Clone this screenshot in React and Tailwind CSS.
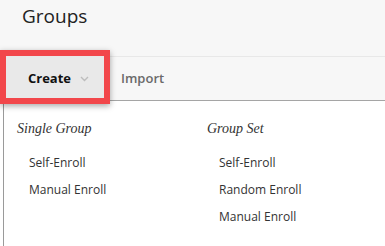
import React from 'react';

const Column = ({ title, items, className = '' }) => (
  <div className={`flex flex-col ${className}`}>
    <h3 className="text-[14px] italic text-[#333] leading-[18px] font-['Liberation_Serif',Georgia,serif]">{title}</h3>
    <ul className="mt-[16px] pl-[12px] flex flex-col gap-[9px]">
      {items.map((item) => (
        <li key={item} className="text-[12px] leading-[18px] text-[#333]">{item}</li>
      ))}
    </ul>
  </div>
);

const App = () => {
  return (
    <div className="w-[385px] h-[246px] overflow-hidden bg-white font-['Open_Sans',sans-serif]">
      <div className="h-[56px] bg-[#f7f7f7] pl-[22px] pt-[2px]">
        <h1 className="text-[19px] leading-[28px] text-[#222]">Groups</h1>
      </div>

      <div className="relative h-[45px] bg-[#f7f7f7] border-t border-[#e8e8e8] border-b border-b-[#a5a5a5] flex items-stretch">
        <button className="ml-[4px] w-[102px] bg-[#e9e9e9] flex items-center pl-[24px] gap-[9px]">
          <span className="text-[13px] font-bold text-[#111]">Create</span>
          <svg width="9" height="6" viewBox="0 0 9 6" className="mt-[1px]">
            <path d="M1 1l3.5 3.5L8 1" fill="none" stroke="#bdbdbd" strokeWidth="1.4" />
          </svg>
        </button>
        <button className="ml-[15px] flex items-center text-[13px] font-semibold text-[#6a6a6a]">Import</button>
        <div className="absolute left-0 top-[-7px] w-[110px] h-[54px] border-[6px] border-[#f2474b] shadow-[0_2px_6px_rgba(0,0,0,0.35)]" />
      </div>

      <div className="ml-[3px] h-full border-l border-[#9a9a9a] pl-[13px] pt-[19px] flex">
        <Column title="Single Group" items={['Self-Enroll', 'Manual Enroll']} className="w-[190px]" />
        <Column title="Group Set" items={['Self-Enroll', 'Random Enroll', 'Manual Enroll']} />
      </div>
    </div>
  );
};

export default App;
